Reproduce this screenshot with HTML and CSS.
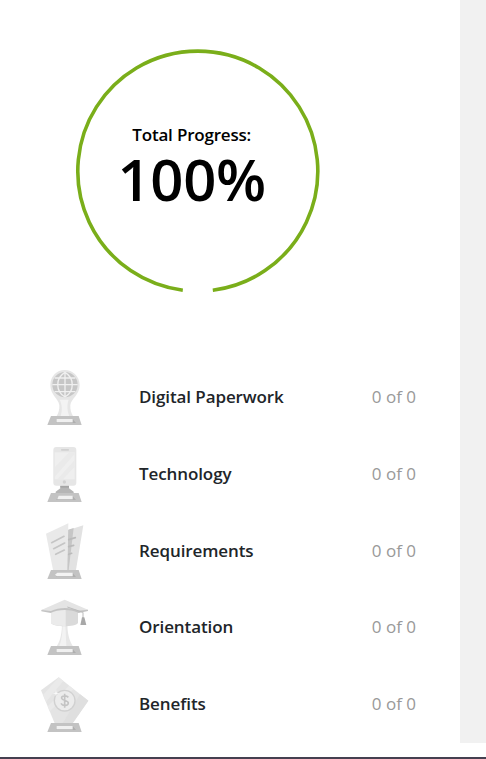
FILE: index.html
```html
<!DOCTYPE html>
<html lang="en">
<head>
<meta charset="utf-8">
<title>Total Progress</title>
<link rel="stylesheet" href="styles.css">
</head>
<body>
<div class="page">
  <main class="panel">
    <section class="progress">
      <svg class="ring" viewBox="0 0 244 244"><path d="M106.8 241.2 A120 120 0 1 1 136.8 241.2"/></svg>
      <div class="progress-text">
        <div class="progress-label">Total Progress:</div>
        <div class="progress-value">100%</div>
      </div>
    </section>
    <ul class="list">
      <li class="row">
        <svg class="icon" viewBox="15 21 180 180">
          <path fill="#e6e6e6" d="M61 76C61 48 80 30 104 30s45 18 45 46c0 29-26 40-28 60-1 13 3 24 8 32H80c5-8 9-19 8-32C86 116 61 105 61 76z"/>
          <path fill="#f3f3f3" d="M89 119h27c-6 15-4 35 2 49H92c5-16 5-34-3-49z"/>
          <circle cx="105" cy="74" r="38" fill="#c6c6c6"/>
          <path fill="none" stroke="#f0f0f0" stroke-width="4" d="M105 36v76M67 74h76M74 54h62M74 95h62M105 37c-29 17-29 57 0 74M105 37c29 17 29 57 0 74"/>
          <path fill="#c3c3c3" d="M63 168h83l9 27H52z"/><path fill="#afafaf" d="M80 187l48-10 10 12H78z"/><path fill="#f0f0f0" d="M80 177h48v10H80z"/>
        </svg>
        <span class="name">Digital Paperwork</span><span class="count">0 of 0</span>
      </li>
      <li class="row">
        <svg class="icon" viewBox="15 12 180 180">
          <path fill="#b5b5b5" d="M91 136h26v9l14 10v5H77v-5l14-10z"/>
          <path fill="#a5a5a5" d="M91 137h26v6H91z"/>
          <rect x="70" y="21" width="69" height="116" rx="9" fill="#e6e6e6"/>
          <path fill="#efefef" d="M74 37h60v81H74z"/>
          <path fill="#eaeaea" d="M74 82l44-45h16v5l-60 69zM82 118l52-58v20l-35 38z"/>
          <rect x="93" y="27" width="24" height="5" rx="2" fill="#d1d1d1"/>
          <circle cx="103" cy="126" r="5" fill="#d1d1d1"/>
          <path fill="#c3c3c3" d="M63 159h83l9 27H52z"/><path fill="#afafaf" d="M80 178l48-10 10 12H78z"/><path fill="#f0f0f0" d="M86 167h42v11H82z"/>
        </svg>
        <span class="name">Technology</span><span class="count">0 of 0</span>
      </li>
      <li class="row">
        <svg class="icon" viewBox="15 12 180 180">
          <path fill="#e2e2e2" d="M114 40l46-15-22 134h-28z"/>
          <path fill="#c6c6c6" d="M114 38l17-5-15 126h-6z"/>
          <path fill="#e9e9e9" d="M48 50l67-31-3 140H69z"/>
          <path stroke="#c5c5c5" stroke-width="5" stroke-linecap="round" d="M65 77l37-19M71 95l33-17M77 112l26-13"/>
          <path stroke="#bababa" stroke-width="5" stroke-linecap="round" d="M116 68l20-6M116 89l15-4M116 112l9-3"/>
          <path fill="#c3c3c3" d="M63 159h83l9 27H52z"/><path fill="#afafaf" d="M80 178l48-10 10 12H78z"/><path fill="#f3f3f3" d="M75 173l7-6h46v11H81z"/>
        </svg>
        <span class="name">Requirements</span><span class="count">0 of 0</span>
      </li>
      <li class="row">
        <svg class="icon" viewBox="15 15 180 180">
          <path fill="#e7e7e7" d="M96 92h16c0 30 5 53 17 71H80c12-18 16-41 16-71z"/>
          <path fill="#f3f3f3" d="M98 94h8l3 69H88c8-20 10-44 10-69z"/>
          <path fill="#dadada" d="M63 60c10-10 72-10 81 0v33c-8 13-73 13-81 0z"/>
          <path fill="#ebebeb" d="M63 60c8-6 31-8 44-8v50c-18 0-38-2-44-9z"/>
          <path fill="#c3c3c3" d="M34 54l70-12 70 11v4l-28 6c-20-12-64-12-84 0l-28-5z"/>
          <path fill="#e4e4e4" d="M34 54l70-31 70 30-29 3c-24-11-58-11-82 1z"/>
          <path fill="none" stroke="#bcbcbc" stroke-width="3" d="M112 45l47 16v17"/>
          <path fill="#a8a8a8" d="M156 76h7l6 23h-18z"/>
          <path fill="#c3c3c3" d="M63 162h83l9 27H52z"/><path fill="#afafaf" d="M80 181l48-10 10 12H78z"/><path fill="#f0f0f0" d="M80 171h48v10H80z"/>
        </svg>
        <span class="name">Orientation</span><span class="count">0 of 0</span>
      </li>
      <li class="row">
        <svg class="icon" viewBox="15 12 180 180">
          <path fill="#e4e4e4" d="M86 22l89 70-47 68H74L33 61z"/>
          <path fill="#eaeaea" d="M86 22l14 11-52 63-9-21zM117 47l14 11-72 66-6-15z"/>
          <path fill="#dfdfdf" d="M150 73l25 19-47 68H98z"/>
          <circle cx="104" cy="92" r="31" fill="#ececec" stroke="#d1d1d1" stroke-width="4"/>
          <path fill="none" stroke="#c4c4c4" stroke-width="5" d="M115 82c-6-7-22-5-20 3 2 8 20 5 20 14 0 9-17 10-22 1M104 71v42"/>
          <path fill="#fafafa" d="M78 60l2 8 8 2-8 2-2 8-2-8-8-2 8-2z"/>
          <path fill="#c3c3c3" d="M63 159h83l9 27H52z"/><path fill="#afafaf" d="M80 178l48-10 10 12H78z"/><path fill="#f0f0f0" d="M80 168h48v10H80z"/>
        </svg>
        <span class="name">Benefits</span><span class="count">0 of 0</span>
      </li>
    </ul>
  </main>
  <aside class="gutter"></aside>
</div>
<footer class="bar"></footer>
</body>
</html>
```

FILE: styles.css
```css
* { box-sizing: border-box; }
body {
  margin: 0;
  height: 759px;
  display: flex;
  flex-direction: column;
  justify-content: space-between;
  overflow: hidden;
  background: #fff;
  font-family: "Open Sans", sans-serif;
}
.page { display: flex; height: 743px; }
.panel { width: 460px; }
.gutter { flex: 1; background: #f1f1f1; }
.bar { height: 2px; background: #454050; }
.progress {
  display: grid;
  width: 244px;
  height: 244px;
  margin: 49px 0 0 75.7px;
}
.ring, .progress-text { grid-area: 1 / 1; }
.ring { width: 244px; height: 244px; overflow: visible; }
.ring path { fill: none; stroke: #7aae1a; stroke-width: 3.6; }
.progress-text {
  padding-top: 75px;
  margin-left: -12px;
  text-align: center;
  color: #000;
}
.progress-label { font-size: 17px; line-height: 22px; font-weight: 600; letter-spacing: -0.2px; }
.progress-value { font-size: 58px; line-height: 66px; font-weight: 600; letter-spacing: -0.3px; }
.list { list-style: none; margin: 65.7px 0 0; padding: 0; }
.row {
  display: grid;
  grid-template-columns: 60px 1fr auto;
  column-gap: 44px;
  align-items: center;
  height: 76.75px;
  padding: 0 44px 0 35px;
  font-size: 17px;
  line-height: 22px;
}
.icon { width: 60px; height: 60px; }
.name { color: #212529; font-weight: 600; letter-spacing: -0.1px; }
.count { color: #999; }
```
